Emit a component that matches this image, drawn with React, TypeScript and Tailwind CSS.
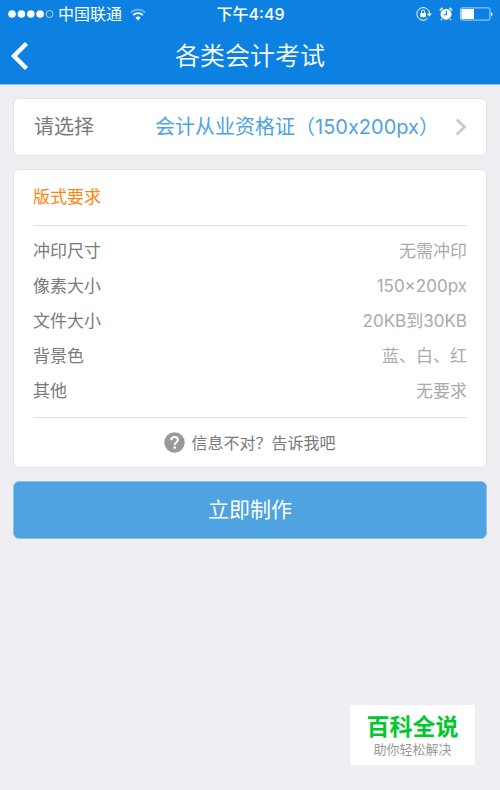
interface Requirement {
  label: string;
  value: string;
}

const REQUIREMENTS: Requirement[] = [
  { label: "冲印尺寸", value: "无需冲印" },
  { label: "像素大小", value: "150×200px" },
  { label: "文件大小", value: "20KB到30KB" },
  { label: "背景色", value: "蓝、白、红" },
  { label: "其他", value: "无要求" },
];

function SignalDots() {
  return (
    <svg className="h-[10px] w-[46px]" viewBox="0 0 46 10" fill="#fff">
      <circle cx="4" cy="5" r="3.8" />
      <circle cx="13.4" cy="5" r="3.8" />
      <circle cx="22.8" cy="5" r="3.8" />
      <circle cx="32.1" cy="5" r="3.8" />
      <circle cx="41.6" cy="5" r="3.5" fill="none" stroke="#fff" strokeWidth="0.8" opacity="0.8" />
    </svg>
  );
}

function WifiIcon() {
  return (
    <svg className="h-[13px] w-4" viewBox="0 0 16 13" fill="none" stroke="#fff">
      <path d="M0.8 4.6a10.2 10.2 0 0 1 14.4 0" strokeWidth="1.7" opacity="0.4" />
      <path d="M3.2 7.2a6.8 6.8 0 0 1 9.6 0" strokeWidth="1.8" />
      <path d="M8 12.4 5.4 9.8a3.7 3.7 0 0 1 5.2 0z" fill="#fff" stroke="none" />
    </svg>
  );
}

function RotationLockIcon() {
  return (
    <svg className="h-4 w-4" viewBox="0 0 16 16" fill="none" stroke="#fff">
      <path d="M13.6 7.4a6.4 6.4 0 1 0-2 5.2" strokeWidth="1" />
      <path d="M10.8 7.5h5l-2.5 3z" fill="#fff" stroke="none" />
      <rect x="4.3" y="7" width="5.6" height="4.2" rx="0.5" fill="#fff" stroke="none" />
      <path d="M5.5 7V5.7a1.6 1.6 0 0 1 3.2 0V7" strokeWidth="1" />
    </svg>
  );
}

function AlarmIcon() {
  return (
    <svg className="h-[14px] w-[14px]" viewBox="0 0 14 14" fill="none" stroke="#fff">
      <circle cx="7" cy="7.2" r="5.5" fill="#fff" stroke="none" />
      <path d="M0.9 3.4a8 8 0 0 1 2.6-2.4M13.1 3.4a8 8 0 0 0-2.6-2.4" strokeWidth="1.5" />
      <path d="M3 12 1.9 13.2M11 12l1.1 1.2" strokeWidth="1.2" />
      <path d="M7.4 3.9v3.8H4.6" stroke="#0c81e2" strokeWidth="1.1" />
    </svg>
  );
}

function BatteryIcon() {
  return (
    <svg className="h-[14px] w-[33px]" viewBox="0 0 33 14">
      <rect x="0.5" y="0.9" width="29.4" height="12.2" rx="1.6" fill="none" stroke="#fff" strokeWidth="0.9" opacity="0.75" />
      <rect x="1.4" y="2" width="12.6" height="10" fill="#fff" />
      <path d="M31 5a2.4 2.4 0 0 1 0 4.4z" fill="#fff" />
    </svg>
  );
}

function StatusBar() {
  return (
    <div className="grid h-7 grid-cols-[1fr_auto_1fr] items-center pr-[7px] pl-2 text-base">
      <div className="flex items-center">
        <SignalDots />
        <span className="ml-1">中国联通</span>
        <span className="ml-2">
          <WifiIcon />
        </span>
      </div>
      <span className="font-medium">下午4:49</span>
      <div className="flex items-center justify-end gap-[7px]">
        <RotationLockIcon />
        <AlarmIcon />
        <BatteryIcon />
      </div>
    </div>
  );
}

function NavBar() {
  return (
    <div className="grid h-14 grid-cols-[48px_1fr_48px] items-center">
      <button type="button" aria-label="返回" className="flex h-full items-center pl-[10px]">
        <svg className="h-[30px] w-5" viewBox="0 0 20 30" fill="none" stroke="#fff" strokeWidth="4.4">
          <path d="M16.5 2.5 4 15l12.5 12.5" />
        </svg>
      </button>
      <h1 className="text-center text-[25px] leading-8 font-[350]">各类会计考试</h1>
    </div>
  );
}

export default function App() {
  return (
    <div className="min-h-screen bg-[#efeef3] font-['Inter','Noto_Sans_CJK_SC',sans-serif]">
      <header className="border-b border-[#8cc0ee] bg-[#0c81e2] text-white">
        <StatusBar />
        <NavBar />
      </header>

      <main className="flex flex-col gap-[13px] px-[13px] pt-[13px]">
        <button
          type="button"
          className="flex h-[58px] w-full items-center rounded-md border border-[#e3e3e6] bg-white pr-[19px] pl-5 text-xl"
        >
          <span className="text-[#7a7a7a]">请选择</span>
          <span className="ml-auto text-[#4ea3e0]">会计从业资格证（150x200px）</span>
          <svg className="ml-4 h-[18px] w-3" viewBox="0 0 12 18" fill="none" stroke="#c7c7cc" strokeWidth="2.6">
            <path d="M1.6 1.5 9.6 9l-8 7.5" />
          </svg>
        </button>

        <section className="rounded-md border border-[#e3e3e6] bg-white px-[19px] text-[17px] leading-[35px]">
          <h2 className="border-b border-[#dfdfe1] py-[10px] text-[#ff8411]">版式要求</h2>
          <dl className="py-2">
            {REQUIREMENTS.map((item) => (
              <div key={item.label} className="flex justify-between">
                <dt className="text-[#7a7a7a]">{item.label}</dt>
                <dd className="text-[#aaaaaa]">{item.value}</dd>
              </div>
            ))}
          </dl>
          <a
            href="#feedback"
            className="flex h-[50px] items-center justify-center gap-[6px] border-t border-[#dfdfe1] text-base text-[#7a7a7a]"
          >
            <svg className="h-[21px] w-[21px]" viewBox="0 0 21 21" fill="none">
              <circle cx="10.5" cy="10.5" r="10.2" fill="#999" />
              <path
                d="M7.2 8.2c0-2 1.4-3.2 3.4-3.2s3.3 1.1 3.3 2.8c0 2.4-3.2 2.5-3.2 5.1"
                stroke="#fff"
                strokeWidth="2"
              />
              <circle cx="10.7" cy="15.6" r="1.4" fill="#fff" />
            </svg>
            <span>信息不对？告诉我吧</span>
          </a>
        </section>

        <button
          type="button"
          className="h-[58px] w-full rounded-md border border-[#8fc3ea] bg-[#4ea3e0] text-[21px] text-white"
        >
          立即制作
        </button>
      </main>

      <aside className="fixed right-[25px] bottom-[25px] flex h-[60px] w-[125px] flex-col items-center justify-center bg-white">
        <strong className="text-[23px] leading-7 font-bold text-[#00c82d]">百科全说</strong>
        <span className="text-[13px] leading-4 text-[#999]">助你轻松解决</span>
      </aside>
    </div>
  );
}
